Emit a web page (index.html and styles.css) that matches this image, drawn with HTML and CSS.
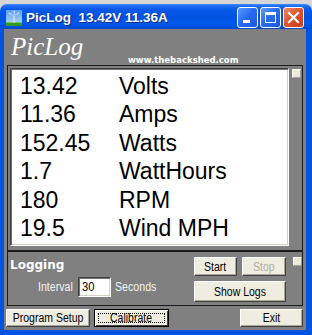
FILE: index.html
```html
<!DOCTYPE html>
<html>
<head>
<meta charset="utf-8">
<link rel="stylesheet" href="styles.css">
</head>
<body>
<div class="screen">
  <div class="window">
    <div class="titlebar">
      <svg class="appicon" width="16" height="16" viewBox="0 0 16 16">
        <defs>
          <linearGradient id="sky" x1="0" y1="0" x2="0" y2="1">
            <stop offset="0" stop-color="#5aa0ff"/>
            <stop offset="1" stop-color="#b9dcff"/>
          </linearGradient>
        </defs>
        <rect x="0" y="0" width="16" height="16" fill="url(#sky)"/>
        <rect x="0" y="12" width="16" height="4" fill="#2f9a2a"/>
        <rect x="0" y="12" width="16" height="1" fill="#6cc85a"/>
        <rect x="7.4" y="6" width="1.2" height="7" fill="#e8e8e8"/>
        <path d="M8 6 L3 2.5 L2.6 3.3 Z" fill="#ffffff"/>
        <path d="M8 6 L13.4 3 L13 2.2 Z" fill="#ffffff"/>
        <path d="M8 6 L8.7 0.8 L7.7 0.8 Z" fill="#ffffff"/>
        <circle cx="8" cy="6" r="1" fill="#c8c8c8"/>
      </svg>
      <span class="title">PicLog&nbsp; 13.42V 11.36A</span>
      <div class="tbtns">
        <div class="tb min"><span class="minbar"></span></div>
        <div class="tb max"><span class="maxbox"></span></div>
        <div class="tb close">
          <svg width="21" height="21" viewBox="0 0 21 21"><path d="M6 6 L15 15 M15 6 L6 15" stroke="#ffffff" stroke-width="2.2" stroke-linecap="square"/></svg>
        </div>
      </div>
    </div>
    <div class="frame">
      <div class="client">
        <div class="header">
          <span class="logo">PicLog</span>
          <span class="site">www.thebackshed.com</span>
        </div>
        <div class="panel data">
          <div class="listbox">
            <div class="row"><span class="val">13.42</span><span class="unit">Volts</span></div>
            <div class="row"><span class="val">11.36</span><span class="unit">Amps</span></div>
            <div class="row"><span class="val">152.45</span><span class="unit">Watts</span></div>
            <div class="row"><span class="val">1.7</span><span class="unit">WattHours</span></div>
            <div class="row"><span class="val">180</span><span class="unit">RPM</span></div>
            <div class="row"><span class="val">19.5</span><span class="unit">Wind MPH</span></div>
          </div>
          <div class="check top-check"></div>
        </div>
        <div class="panel logging">
          <div class="log-left">
            <div class="log-title">Logging</div>
            <div class="interval">
              <span class="lbl lbl-interval">Interval</span>
              <span class="textbox"><span class="tt">30</span></span>
              <span class="lbl">Seconds</span>
            </div>
          </div>
          <div class="log-right">
            <div class="btn start"><span class="t">Start</span></div>
            <div class="btn stop disabled"><span class="t">Stop</span></div>
            <div class="check log-check"></div>
            <div class="btn showlogs"><span class="t">Show Logs</span></div>
          </div>
        </div>
        <div class="bottom">
          <div class="btn setup"><span class="t">Program Setup</span></div>
          <div class="btn calibrate default"><span class="focus"><span class="t">Calibrate</span></span></div>
          <div class="spacer"></div>
          <div class="btn exit"><span class="t">Exit</span></div>
        </div>
      </div>
    </div>
  </div>
</div>
</body>
</html>
```
FILE: styles.css
```css
html, body {
  margin: 0;
  padding: 0;
  background: #d9d9d9;
}

.screen {
  width: 312px;
  height: 335px;
  overflow: hidden;
  background: #d6d6d6;
  padding-top: 4px;
  box-sizing: border-box;
}

.window {
  width: 312px;
  display: flex;
  flex-direction: column;
}

.titlebar {
  height: 25px;
  border-radius: 7px 7px 0 0;
  background: linear-gradient(to bottom, #3b8cff 0px, #1f6df5 2px, #0a5ae8 5px, #0052e0 12px, #0058ea 19px, #0050dc 23px, #0046c8 25px);
  display: flex;
  align-items: center;
  position: relative;
}

.appicon {
  margin-left: 6px;
  margin-top: 2px;
  flex: none;
}

.title {
  margin-left: 4px;
  font-family: "Liberation Sans", Arial, sans-serif;
  font-weight: bold;
  font-size: 13.5px;
  color: #ffffff;
  text-shadow: 1px 1px 0 #0a2a8a;
  white-space: nowrap;
  margin-top: 2px;
}

.tbtns {
  margin-left: auto;
  margin-right: 8px;
  margin-top: 2px;
  display: flex;
  gap: 2px;
}

.tb {
  width: 19px;
  height: 19px;
  border: 1px solid #ffffff;
  border-radius: 3px;
  background: linear-gradient(135deg, #5c9cff 0%, #2a6df0 45%, #1a55e0 100%);
  position: relative;
  display: flex;
}

.tb.close {
  background: linear-gradient(135deg, #f08a66 0%, #e0562e 45%, #c83c18 100%);
  align-items: center;
  justify-content: center;
}

.tb.close svg {
  margin: -1px;
}

.minbar {
  width: 7px;
  height: 3px;
  background: #ffffff;
  margin: 12px 0 0 5px;
}

.maxbox {
  width: 9px;
  height: 7px;
  border: 1px solid #ffffff;
  border-top-width: 3px;
  margin: 4px 0 0 4px;
}

.frame {
  background: #0052e0;
  padding: 0 6px 5px 4px;
  border-left: 1px solid #0040b8;
  margin-left: -1px;
}

.client {
  background: #808080;
  height: 301px;
  display: flex;
  flex-direction: column;
  box-sizing: border-box;
  padding-bottom: 3px;
}

.header {
  height: 36px;
  display: flex;
  align-items: flex-start;
  flex: none;
}

.logo {
  width: 117px;
  margin-left: 7px;
  margin-top: 4px;
  font-family: "Liberation Serif", "Times New Roman", serif;
  font-style: italic;
  font-size: 25px;
  line-height: 28px;
  color: #ffffff;
}

.site {
  margin-top: 26px;
  font-family: "DejaVu Sans", Verdana, sans-serif;
  font-weight: bold;
  font-size: 8.5px;
  line-height: 10px;
  color: #ffffff;
  white-space: nowrap;
}

.panel {
  margin: 0 3px;
  border: 1px solid #1c1c1c;
  box-sizing: border-box;
  flex: none;
}

.panel.data {
  height: 186px;
  display: flex;
  align-items: flex-start;
  padding: 2px 0 0 2px;
}

.listbox {
  width: 279px;
  height: 178px;
  box-sizing: border-box;
  background: #ffffff;
  border-top: 1px solid #404040;
  border-left: 1px solid #404040;
  border-right: 1px solid #ffffff;
  border-bottom: 1px solid #ffffff;
  box-shadow: inset 1px 1px 0 #6e6e6e, inset -1px -1px 0 #d4d0c8;
  padding: 3px 0 0 9px;
  font-family: "Liberation Sans", Arial, sans-serif;
  font-size: 23px;
  line-height: 28.4px;
  color: #000000;
}

.row {
  display: flex;
  white-space: nowrap;
}

.val {
  width: 99px;
  flex: none;
}

.check {
  width: 9px;
  height: 9px;
  box-sizing: border-box;
  background: #ece9d8;
  border-top: 1px solid #ffffff;
  border-left: 1px solid #ffffff;
  border-right: 1px solid #a0a0a0;
  border-bottom: 1px solid #a0a0a0;
}

.top-check {
  margin: 1px 0 0 3px;
}

.panel.logging {
  height: 55px;
  display: flex;
}

.log-left {
  flex: 1;
  padding: 6px 0 0 2px;
}

.log-title {
  font-family: "DejaVu Sans", Tahoma, sans-serif;
  font-weight: bold;
  font-size: 12px;
  line-height: 14px;
  color: #ffffff;
}

.interval {
  display: flex;
  align-items: center;
  margin: 5px 0 0 28px;
}

.lbl {
  display: inline-block;
  font-family: "Liberation Sans", Arial, sans-serif;
  font-size: 12.5px;
  color: #f2f2f2;
  transform: scaleX(0.85);
  transform-origin: left center;
  white-space: nowrap;
}

.lbl-interval {
  width: 35px;
}

.textbox {
  width: 33px;
  height: 20px;
  box-sizing: border-box;
  margin: 0 4px 0 5px;
  background: #ffffff;
  border-top: 1px solid #404040;
  border-left: 1px solid #404040;
  border-right: 1px solid #ffffff;
  border-bottom: 1px solid #ffffff;
  box-shadow: inset 1px 1px 0 #707070, inset -1px -1px 0 #d4d0c8;
  padding: 1px 0 0 3px;
  font-family: "Liberation Sans", Arial, sans-serif;
  font-size: 12.5px;
  line-height: 16px;
  color: #000000;
}

.tt {
  display: inline-block;
  transform: scaleX(0.9);
  transform-origin: left center;
}

.log-right {
  display: grid;
  grid-template-columns: 43px 44px 9px;
  grid-template-rows: 19px 21px;
  column-gap: 5px;
  row-gap: 5px;
  padding: 5px 2px 0 0;
}

.log-right .check {
  margin-left: 2px;
  margin-top: 0;
}

.showlogs {
  grid-column: 1 / 3;
}

.btn {
  box-sizing: border-box;
  background: #efede0;
  border-top: 1px solid #ffffff;
  border-left: 1px solid #ffffff;
  border-right: 1px solid #404040;
  border-bottom: 1px solid #404040;
  box-shadow: inset -1px -1px 0 #aca899;
  display: flex;
  align-items: center;
  justify-content: center;
  font-family: "Liberation Sans", Arial, sans-serif;
  font-size: 12.5px;
  color: #000000;
  white-space: nowrap;
}

.t {
  display: inline-block;
  transform: scaleX(0.84);
  transform-origin: center center;
}

.btn.disabled {
  color: #b0ad9f;
}

.bottom {
  display: flex;
  height: 18px;
  margin-top: 3px;
  padding: 0 3px 0 2px;
}

.setup {
  width: 84px;
}

.calibrate {
  width: 75px;
  margin-left: 4px;
  border: 1px solid #000000;
  box-shadow: inset 1px 1px 0 #ffffff, inset -1px -1px 0 #404040;
}

.calibrate .focus {
  border: 1px dotted #000000;
  align-self: stretch;
  margin: 3px;
  flex: 1;
  display: flex;
  align-items: center;
  justify-content: center;
  line-height: 10px;
}

.spacer {
  flex: 1;
}

.exit {
  width: 63px;
}
```
